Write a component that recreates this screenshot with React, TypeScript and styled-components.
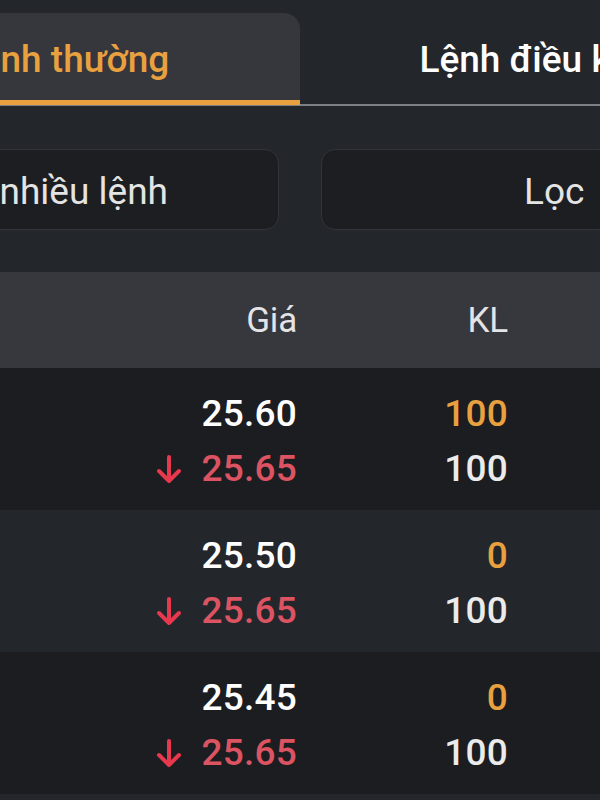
import React from "react";
import styled, { createGlobalStyle } from "styled-components";

const GlobalStyle = createGlobalStyle`
  html, body {
    margin: 0;
    padding: 0;
    background: #23272b;
    overflow: hidden;
  }
  body {
    font-family: Roboto, "Noto Sans", "Liberation Sans", sans-serif;
  }
`;

const Viewport = styled.div`
  width: 600px;
  height: 800px;
  overflow: hidden;
  background: #23272b;
`;

const Page = styled.div`
  width: 940px;
  margin-left: -170px;
  display: flex;
  flex-direction: column;
`;

const TabBar = styled.div`
  display: grid;
  grid-template-columns: 1fr 1fr;
  padding-top: 13px;
  border-bottom: 2px solid #7c7f84;
`;

const Tab = styled.div<{ $active?: boolean }>`
  height: 92px;
  margin-bottom: -1px;
  box-sizing: border-box;
  padding-top: 5px;
  display: flex;
  align-items: center;
  justify-content: center;
  font-size: 37px;
  font-weight: 500;
  color: ${(p) => (p.$active ? "#e9a03f" : "#ffffff")};
  background: ${(p) => (p.$active ? "#35373c" : "transparent")};
  border-radius: 16px 16px 0 0;
  border-bottom: 5px solid ${(p) => (p.$active ? "#e9a03f" : "transparent")};
`;

const TabLabel = styled.span<{ $shift?: number }>`
  margin-left: ${(p) => p.$shift || 0}px;
`;

const ActionRow = styled.div`
  display: grid;
  grid-template-columns: 1fr 1fr;
  gap: 42px;
  padding: 0 17px;
  margin-top: 43px;
`;

const ActionButton = styled.div<{ $justify?: string; $padStart?: number; $padEnd?: number }>`
  height: 81px;
  box-sizing: border-box;
  display: flex;
  align-items: center;
  justify-content: ${(p) => p.$justify || "center"};
  padding: 4px ${(p) => p.$padEnd || 0}px 0 ${(p) => p.$padStart || 0}px;
  background: #1c1e21;
  border: 1.5px solid #31343a;
  border-radius: 14px;
  color: #e4e4e4;
  font-size: 37px;
  font-weight: 400;
  white-space: nowrap;
`;

const Table = styled.div`
  margin-top: 42px;
  display: flex;
  flex-direction: column;
`;

const Grid = styled.div`
  display: grid;
  grid-template-columns: 170px 297px 211px 1fr;
`;

const HeaderRow = styled(Grid)`
  height: 96px;
  background: #36383d;
  align-items: center;
`;

const HeaderCell = styled.div`
  text-align: right;
  font-size: 35px;
  font-weight: 400;
  color: #e4e4e6;
  letter-spacing: -0.2px;
`;

const Row = styled(Grid)<{ $alt?: boolean }>`
  height: 142px;
  box-sizing: border-box;
  padding: 18px 0 12px;
  background: ${(p) => (p.$alt ? "#23272b" : "#1c1d20")};
`;

const Cell = styled.div`
  display: flex;
  flex-direction: column;
  align-items: flex-end;
`;

const Line = styled.div<{ $color: string }>`
  height: 55px;
  display: flex;
  align-items: center;
  gap: 20px;
  font-size: 37px;
  font-weight: 500;
  color: ${(p) => p.$color};
  letter-spacing: 0.2px;
`;

const DownArrow = () => (
  <svg width="26" height="30" viewBox="0 0 26 30" fill="none">
    <path
      d="M13 3v24M3 17l10 10 10-10"
      stroke="#e8384e"
      strokeWidth="4"
      strokeLinecap="round"
      strokeLinejoin="round"
    />
  </svg>
);

type Order = { price: string; vol: string; match: string; matchVol: string };

const orders: Order[] = [
  { price: "25.60", vol: "100", match: "25.65", matchVol: "100" },
  { price: "25.50", vol: "0", match: "25.65", matchVol: "100" },
  { price: "25.45", vol: "0", match: "25.65", matchVol: "100" },
  { price: "25.40", vol: "0", match: "25.65", matchVol: "100" },
];

export default function App() {
  return (
    <Viewport>
      <GlobalStyle />
      <Page>
        <TabBar>
          <Tab $active>Lệnh thường</Tab>
          <Tab>
            <TabLabel $shift={10}>Lệnh điều kiện</TabLabel>
          </Tab>
        </TabBar>
        <ActionRow>
          <ActionButton $justify="flex-end" $padEnd={110}>
            Hủy nhiều lệnh
          </ActionButton>
          <ActionButton $justify="flex-start" $padStart={202}>
            Lọc
          </ActionButton>
        </ActionRow>
        <Table>
          <HeaderRow>
            <div />
            <HeaderCell>Giá</HeaderCell>
            <HeaderCell>KL</HeaderCell>
            <div />
          </HeaderRow>
          {orders.map((o, i) => (
            <Row key={i} $alt={i % 2 === 1}>
              <div />
              <Cell>
                <Line $color="#ffffff">{o.price}</Line>
                <Line $color="#dc5362">
                  <DownArrow />
                  {o.match}
                </Line>
              </Cell>
              <Cell>
                <Line $color="#e9a03f">{o.vol}</Line>
                <Line $color="#ebebeb">{o.matchVol}</Line>
              </Cell>
              <div />
            </Row>
          ))}
        </Table>
      </Page>
    </Viewport>
  );
}
